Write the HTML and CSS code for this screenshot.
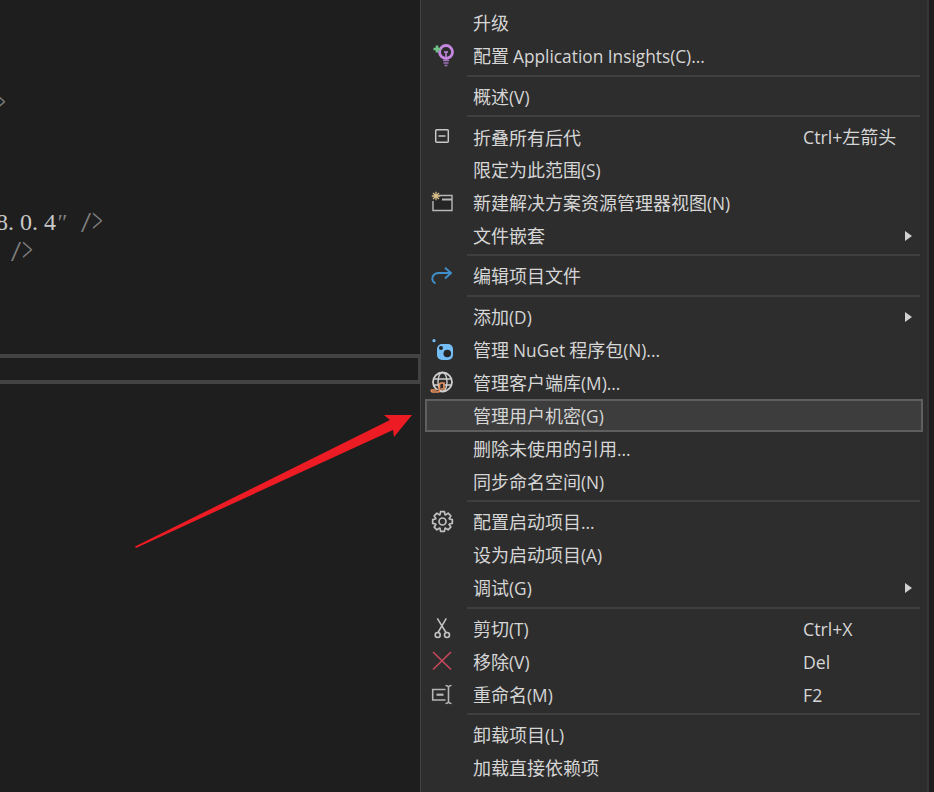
FILE: index.html
```html
<!DOCTYPE html>
<html lang="zh-CN">
<head>
<meta charset="utf-8">
<title>解决方案资源管理器菜单</title>
<link rel="stylesheet" href="styles.css">
</head>
<body>
<div class="screen">
  <section class="editor">
    <div class="code code-first"><span class="ch tag gt">&gt;</span></div>
    <div class="code code-second"><span class="ch val">8</span><span class="ch val">.</span><span class="ch val">0</span><span class="ch val">.</span><span class="ch val">4</span><span class="ch tag quote">″</span><span class="ch"> </span><span class="ch tag slash">/</span><span class="ch tag gt">&gt;</span></div>
    <div class="code code-third"><span class="ch"> </span><span class="ch tag slash">/</span><span class="ch tag gt">&gt;</span></div>
    <div class="input-box"></div>
  </section>

  <nav class="menu">
    <div class="row"><span class="label">升级</span></div>
    <div class="row">
      <svg class="icon" viewBox="0 0 24 24"><circle cx="16" cy="8" r="6.5" fill="#2d2d2d" stroke="#c586e0" stroke-width="2.8"/><path d="M14 8h4M16 8v6" stroke="#c586e0" stroke-width="1.5" fill="none"/><path d="M13 16.500h6M13.500 19h5M14.500 21.500h3" stroke="#a070b8" stroke-width="1.6" fill="none"/><path d="M7 1.500v7M3.500 5h7" stroke="#6fc487" stroke-width="2.600" fill="none"/></svg>
      <span class="label">配置 <span class="lat">Application Insights(C)...</span></span>
    </div>
    <div class="sep wide"></div>
    <div class="row"><span class="label">概述<span class="lat">(V)</span></span></div>
    <div class="sep"></div>
    <div class="row">
      <svg class="icon" viewBox="0 0 24 24"><rect x="5.700" y="4.700" width="12.600" height="12.600" rx="1" fill="none" stroke="#c8c8c8" stroke-width="1.500"/><path d="M8.500 11h7" stroke="#c8c8c8" stroke-width="1.500"/></svg>
      <span class="label">折叠所有后代</span><span class="key"><span class="lat">Ctrl+</span>左箭头</span>
    </div>
    <div class="row"><span class="label">限定为此范围<span class="lat">(S)</span></span></div>
    <div class="row">
      <svg class="icon" viewBox="0 0 24 24"><path d="M9 4.500h13v15H3V10" fill="#252525" stroke="#b8b8b8" stroke-width="1.400"/><path d="M12 8.500h10" stroke="#b8b8b8" stroke-width="2"/><path d="M6 .8v8.400M1.800 5h8.400M3 2l6 6M9 2L3 8" stroke="#d9c08a" stroke-width="1.300"/></svg>
      <span class="label">新建解决方案资源管理器视图<span class="lat">(N)</span></span>
    </div>
    <div class="row"><span class="label">文件嵌套</span><span class="arrow"></span></div>
    <div class="sep"></div>
    <div class="row">
      <svg class="icon" viewBox="0 0 24 24"><path d="M5.500 19.500C3 18 1.800 15.500 2.600 13 3.500 10.300 6 9 9 9h12M15 3.700 21 9l-6 5.500" fill="none" stroke="#3f8fc9" stroke-width="1.900"/></svg>
      <span class="label">编辑项目文件</span>
    </div>
    <div class="sep wide"></div>
    <div class="row"><span class="label">添加<span class="lat">(D)</span></span><span class="arrow"></span></div>
    <div class="row">
      <svg class="icon" viewBox="0 0 24 24"><circle cx="4" cy="2.700" r="1.600" fill="#75bdf5"/><rect x="7" y="6" width="16" height="16" rx="5" fill="#75bdf5"/><circle cx="11" cy="10" r="2" fill="#252525"/><circle cx="17.300" cy="15.500" r="3.800" fill="#252525"/></svg>
      <span class="label">管理 <span class="lat">NuGet</span> 程序包<span class="lat">(N)...</span></span>
    </div>
    <div class="row">
      <svg class="icon" viewBox="0 0 24 24"><circle cx="12.500" cy="11" r="9.500" fill="none" stroke="#cfcfcf" stroke-width="1.800"/><ellipse cx="12.500" cy="11" rx="4.500" ry="9.500" fill="none" stroke="#cfcfcf" stroke-width="1.400"/><path d="M3 8h19M3 14h19" stroke="#cfcfcf" stroke-width="1.400"/><path d="M1.500 21h6c1.500 0 2-1 2-2v-5c0-1 .7-2 2-2h2.500v6h-3M1.500 21v-2h5" fill="#2d2d2d" stroke="#e8905c" stroke-width="1.700"/></svg>
      <span class="label">管理客户端库<span class="lat">(M)...</span></span>
    </div>
    <div class="row active"><span class="label">管理用户机密<span class="lat">(G)</span></span></div>
    <div class="row"><span class="label">删除未使用的引用<span class="lat">...</span></span></div>
    <div class="row"><span class="label">同步命名空间<span class="lat">(N)</span></span></div>
    <div class="sep"></div>
    <div class="row">
      <svg class="icon" viewBox="0 0 24 24"><g transform="translate(12.500 11.500)" fill="none" stroke="#c0c0c0" stroke-width="1.700" stroke-linejoin="round"><polygon points="6.860,-2.500 9.820,-1.910 9.820,1.910 6.860,2.500 6.620,3.090 8.290,5.590 5.590,8.290 3.090,6.620 2.500,6.860 1.910,9.820 -1.910,9.820 -2.500,6.860 -3.090,6.620 -5.590,8.290 -8.290,5.590 -6.620,3.090 -6.860,2.500 -9.820,1.910 -9.820,-1.910 -6.860,-2.500 -6.620,-3.090 -8.290,-5.590 -5.590,-8.290 -3.090,-6.620 -2.500,-6.860 -1.910,-9.820 1.910,-9.820 2.500,-6.860 3.090,-6.620 5.590,-8.290 8.290,-5.590 6.620,-3.090"/><circle r="3.500"/></g></svg>
      <span class="label">配置启动项目<span class="lat">...</span></span>
    </div>
    <div class="row"><span class="label">设为启动项目<span class="lat">(A)</span></span></div>
    <div class="row"><span class="label">调试<span class="lat">(G)</span></span><span class="arrow"></span></div>
    <div class="sep wide"></div>
    <div class="row">
      <svg class="icon" viewBox="0 0 24 24"><path d="M7.300 1.300 16 15.500M16.300 1.300 8 15.500" fill="none" stroke="#c4c4c4" stroke-width="1.500"/><circle cx="7.700" cy="18" r="2.500" fill="none" stroke="#c4c4c4" stroke-width="1.600"/><circle cx="17" cy="18" r="2.500" fill="none" stroke="#c4c4c4" stroke-width="1.600"/></svg>
      <span class="label">剪切<span class="lat">(T)</span></span><span class="key"><span class="lat">Ctrl+X</span></span>
    </div>
    <div class="row">
      <svg class="icon" viewBox="0 0 24 24"><path d="M3 2l18 17.500M21 2 3 19.500" fill="none" stroke="#c9485a" stroke-width="1.600"/></svg>
      <span class="label">移除<span class="lat">(V)</span></span><span class="key"><span class="lat">Del</span></span>
    </div>
    <div class="row">
      <svg class="icon" viewBox="0 0 24 24"><path d="M15.500 6.500H2.700v10.500h12.800" fill="none" stroke="#b5b5b5" stroke-width="1.600"/><path d="M6.500 11.700h7" stroke="#b5b5b5" stroke-width="2.200"/><path d="M15.500 2.500c1.500 0 2.500.5 3 1.500.5-1 1.500-1.500 3-1.500M18.500 4v15M15.500 20.500c1.500 0 2.500-.5 3-1.500.5 1 1.500 1.500 3 1.500" fill="none" stroke="#b5b5b5" stroke-width="1.600"/></svg>
      <span class="label">重命名<span class="lat">(M)</span></span><span class="key"><span class="lat">F2</span></span>
    </div>
    <div class="sep"></div>
    <div class="row"><span class="label">卸载项目<span class="lat">(L)</span></span></div>
    <div class="row"><span class="label">加载直接依赖项</span></div>
  </nav>
  <div class="edge"></div>

  <svg class="pointer" viewBox="0 0 934 792"><polygon points="135,546.500 390,420 384,415 412,415 394,437 393,430 136,548" fill="#ed1c24"/></svg>
</div>
</body>
</html>
```

FILE: styles.css
```css
* {
  box-sizing: border-box;
}

html,
body {
  margin: 0;
  padding: 0;
  background: #1e1e1e;
}

.screen {
  position: relative;
  display: flex;
  width: 934px;
  height: 792px;
  overflow: hidden;
  background: #1e1e1e;
}

.editor {
  flex: 0 0 420px;
  padding-top: 89px;
}

.code {
  display: flex;
  height: 29px;
  line-height: 29px;
  font-family: "Liberation Serif", "Noto Sans CJK SC", serif;
  font-size: 24px;
  white-space: pre;
}

.code-first {
  margin-left: -5px;
}

.code-second {
  margin-top: 90px;
  margin-left: -4px;
}

.code-third {
  margin-left: -2px;
}

.ch {
  flex: 0 0 12px;
  width: 12px;
}

.val {
  color: #c8c8c8;
}

.tag {
  color: #808080;
}

.quote {
  font-style: italic;
}

.slash {
  transform: translateX(1px) scale(1.5, 1.25);
  transform-origin: 0 55%;
}

.gt {
  transform: scale(0.8, 1.4);
  transform-origin: 0 57%;
}

.input-box {
  height: 30px;
  margin-top: 88px;
  border: solid #434343;
  border-width: 4px 2px 4px 0;
  background: #1e1e1e;
}

.menu {
  flex: 0 0 507px;
  height: 792px;
  padding: 6px 4px 0 4px;
  border-left: 1px solid #434343;
  background: #2d2d2d;
  font-family: "Noto Sans CJK SC", sans-serif;
  font-size: 18px;
  color: #d6d6d6;
}

.lat {
  font-family: "Open Sans", sans-serif;
  font-size: 17.300px;
}

.key .lat {
  font-size: 17.700px;
}

.row {
  display: grid;
  grid-template-columns: 48px 1fr 102px 18px;
  align-items: center;
  height: 33px;
  line-height: 33px;
  white-space: nowrap;
}

.row.active {
  background: #3d3d3d;
  box-shadow: inset 0 0 0 2px #5f5f5f;
}

.icon {
  grid-column: 1;
  width: 24px;
  height: 24px;
  margin-left: 5px;
}

.label {
  grid-column: 2;
}

.key {
  grid-column: 3;
}

.arrow {
  grid-column: 4;
  justify-self: start;
  width: 0;
  height: 0;
  border-left: 7px solid #d0d0d0;
  border-top: 5px solid transparent;
  border-bottom: 5px solid transparent;
}

.sep {
  height: 7px;
  margin: 0 3px 0 42px;
  background: linear-gradient(#3f3f3f, #3f3f3f) 0 2px / 100% 2px no-repeat;
}

.sep.wide {
  height: 8px;
  background-position: 0 3px;
}

.edge {
  flex: 1 1 auto;
  border-left: 2px solid #363636;
}

.pointer {
  position: absolute;
  inset: 0;
  width: 934px;
  height: 792px;
  pointer-events: none;
}
```
